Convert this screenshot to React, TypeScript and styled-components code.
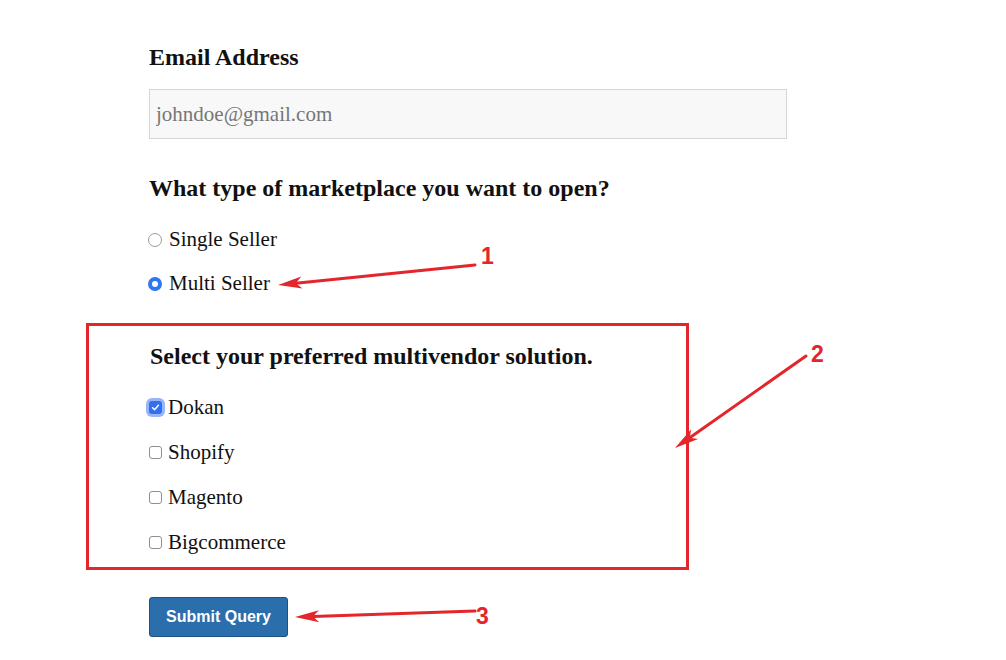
import React from "react";
import styled, { createGlobalStyle } from "styled-components";

const Global = createGlobalStyle`
  html, body { margin: 0; padding: 0; background: #fff; }
  body { font-family: "Liberation Serif", "DejaVu Serif", serif; color: #111; }
`;

const Page = styled.div`
  position: relative;
  width: 1006px;
  height: 660px;
  box-sizing: border-box;
  padding: 42px 0 0 149px;
  overflow: hidden;
`;

const Heading = styled.div<{ $top?: number; $indent?: number }>`
  font-size: 24px;
  font-weight: 700;
  line-height: 30px;
  margin-top: ${(p) => p.$top ?? 0}px;
  padding-left: ${(p) => p.$indent ?? 0}px;
`;

const EmailInput = styled.input`
  display: block;
  box-sizing: border-box;
  width: 638px;
  height: 50px;
  margin-top: 17px;
  padding: 0 6px;
  border: 1px solid #d6d6d6;
  background: #f8f8f8;
  font-family: "Liberation Serif", serif;
  font-size: 21px;
  color: #333;
  outline: none;
  &::placeholder { color: #767676; }
`;

const OptionList = styled.div<{ $top: number; $gap: number }>`
  display: flex;
  flex-direction: column;
  gap: ${(p) => p.$gap}px;
  margin-top: ${(p) => p.$top}px;
`;

const Option = styled.label<{ $gap?: number }>`
  display: flex;
  align-items: center;
  gap: ${(p) => p.$gap ?? 7}px;
  font-size: 21px;
  line-height: 30px;
  color: #111;
`;

const Radio = styled.input.attrs({ type: "radio" })`
  appearance: none;
  -webkit-appearance: none;
  box-sizing: border-box;
  width: 14px;
  height: 14px;
  margin: 1px 0 0 -1px;
  border: 1px solid #9a9a9a;
  border-radius: 50%;
  background: #fff;
  &:checked {
    border: 4.5px solid #2f76f2;
    background: #fff;
  }
`;

const Check = styled.input.attrs({ type: "checkbox" })<{ $focus?: boolean }>`
  appearance: none;
  -webkit-appearance: none;
  box-sizing: border-box;
  width: 13px;
  height: 13px;
  margin: 1px 0 0 0;
  border: 1px solid #8f8f8f;
  border-radius: 3px;
  background: #fff;
  &:checked {
    border: none;
    background: #2f6ff0
      url("data:image/svg+xml;utf8,<svg xmlns='http://www.w3.org/2000/svg' viewBox='0 0 13 13'><path d='M3.6 6.8 L5.6 8.8 L9.4 4.2' fill='none' stroke='white' stroke-width='1.5' stroke-linecap='round' stroke-linejoin='round'/></svg>")
      center / 13px 13px no-repeat;
  }
  ${(p) => (p.$focus ? "box-shadow: 0 0 0 3px rgba(70,120,245,0.55);" : "")}
`;

const Highlight = styled.div`
  box-sizing: border-box;
  width: 603px;
  margin: 25px 0 0 -63px;
  padding: 15px 0 10px 60px;
  border: 3px solid #e3262b;
`;

const SubmitButton = styled.button`
  display: block;
  margin-top: 27px;
  width: 139px;
  height: 40px;
  box-sizing: border-box;
  background: #2a6eab;
  border: 1px solid #1d5283;
  border-radius: 3px;
  color: #fff;
  font-family: "Liberation Sans", Arial, sans-serif;
  font-weight: 700;
  font-size: 16px;
  padding: 0;
`;

const Overlay = styled.svg`
  position: absolute;
  left: 0;
  top: 0;
  pointer-events: none;
`;

type Pt = [number, number];

function Arrow({ tail, tip }: { tail: Pt; tip: Pt }) {
  const dx = tip[0] - tail[0];
  const dy = tip[1] - tail[1];
  const len = Math.hypot(dx, dy);
  const ux = dx / len;
  const uy = dy / len;
  const nx = -uy;
  const ny = ux;
  const headLen = 24;
  const half = 6;
  const bx = tip[0] - ux * headLen;
  const by = tip[1] - uy * headLen;
  const nbx = tip[0] - ux * (headLen - 6);
  const nby = tip[1] - uy * (headLen - 6);
  const pts = [
    [tip[0], tip[1]],
    [bx + nx * half, by + ny * half],
    [nbx, nby],
    [bx - nx * half, by - ny * half],
  ]
    .map((p) => p.join(","))
    .join(" ");
  return (
    <g>
      <line
        x1={tail[0]}
        y1={tail[1]}
        x2={nbx}
        y2={nby}
        stroke="#e3262b"
        strokeWidth={3}
        strokeLinecap="round"
      />
      <polygon points={pts} fill="#e3262b" />
    </g>
  );
}

const Num = ({ x, y, children }: { x: number; y: number; children: string }) => (
  <text
    x={x}
    y={y}
    fill="#e3262b"
    fontFamily="Liberation Sans, Arial, sans-serif"
    fontWeight={700}
    fontSize={23}
  >
    {children}
  </text>
);

export default function App() {
  return (
    <>
      <Global />
      <Page>
        <Heading>Email Address</Heading>
        <EmailInput placeholder="johndoe@gmail.com" />

        <Heading $top={34}>What type of marketplace you want to open?</Heading>
        <OptionList $top={21} $gap={14}>
          <Option>
            <Radio name="mp" />
            Single Seller
          </Option>
          <Option>
            <Radio name="mp" defaultChecked />
            Multi Seller
          </Option>
        </OptionList>

        <Highlight>
          <Heading $indent={1}>Select your preferred multivendor solution.</Heading>
          <OptionList $top={21} $gap={15}>
            <Option $gap={6}>
              <Check defaultChecked $focus />
              Dokan
            </Option>
            <Option $gap={6}>
              <Check />
              Shopify
            </Option>
            <Option $gap={6}>
              <Check />
              Magento
            </Option>
            <Option $gap={6}>
              <Check />
              Bigcommerce
            </Option>
          </OptionList>
        </Highlight>

        <SubmitButton>Submit Query</SubmitButton>

        <Overlay width={1006} height={660} viewBox="0 0 1006 660">
          <Arrow tail={[475, 265]} tip={[278, 285]} />
          <Num x={481} y={264}>1</Num>
          <Arrow tail={[806, 356]} tip={[675, 448]} />
          <Num x={811} y={362}>2</Num>
          <Arrow tail={[475, 611]} tip={[295, 617]} />
          <Num x={476} y={624}>3</Num>
        </Overlay>
      </Page>
    </>
  );
}
